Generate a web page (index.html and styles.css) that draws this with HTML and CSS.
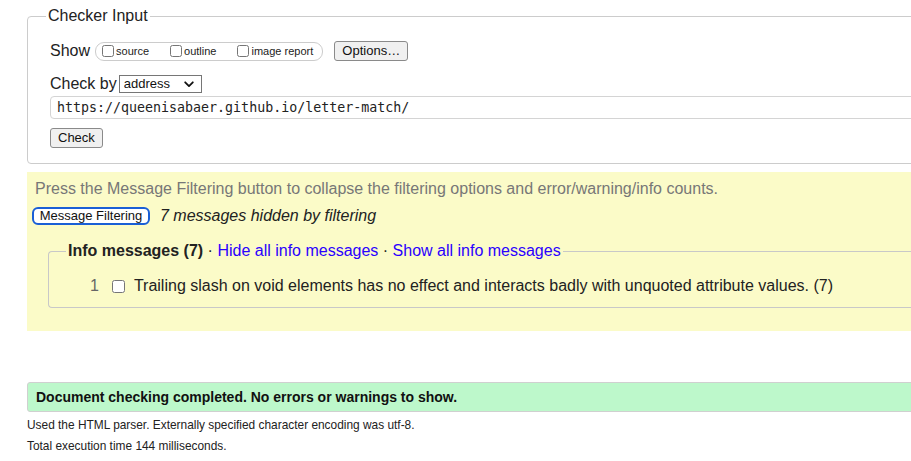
FILE: index.html
```html
<!DOCTYPE html>
<html lang="en">
<head>
<meta charset="utf-8">
<title>Nu Html Checker</title>
<link rel="stylesheet" href="styles.css">
</head>
<body>
<form class="checker">
  <fieldset class="input-set">
    <legend>Checker Input</legend>
    <div class="show-row">
      <span class="lbl">Show</span>
      <span class="pill">
        <label class="opt"><input type="checkbox">source</label>
        <label class="opt"><input type="checkbox">outline</label>
        <label class="opt"><input type="checkbox">image report</label>
      </span>
      <button type="button" class="btn">Options…</button>
    </div>
    <div class="checkby-row">
      <span class="lbl">Check by</span>
      <span class="select-wrap">
        <select class="sel"><option>address</option></select>
        <svg class="chev" width="10" height="7" viewBox="0 0 10 7"><path d="M1.2 1.3 L5 5.1 L8.8 1.3" fill="none" stroke="#111" stroke-width="1.8" stroke-linecap="round" stroke-linejoin="round"/></svg>
      </span>
    </div>
    <input class="url" type="text" value="https://queenisabaer.github.io/letter-match/">
    <div class="submit-row"><button type="button" class="btn">Check</button></div>
  </fieldset>
</form>

<section class="filters">
  <p class="hint">Press the Message Filtering button to collapse the filtering options and error/warning/info counts.</p>
  <div class="mf-row">
    <button type="button" class="mf-btn">Message Filtering</button>
    <em class="hidden-count">7 messages hidden by filtering</em>
  </div>
  <fieldset class="info-set">
    <legend><strong>Info messages (7)</strong> · <a href="#" class="lnk">Hide all info messages</a> · <a href="#" class="lnk">Show all info messages</a></legend>
    <div class="msg">
      <span class="num">1</span>
      <input type="checkbox" class="msg-check">
      <span class="msg-text">Trailing slash on void elements has no effect and interacts badly with unquoted attribute values. (7)</span>
    </div>
  </fieldset>
</section>

<p class="success">Document checking completed. No errors or warnings to show.</p>
<p class="meta first">Used the HTML parser. Externally specified character encoding was utf-8.</p>
<p class="meta">Total execution time 144 milliseconds.</p>
</body>
</html>
```

FILE: styles.css
```css
html, body {
  margin: 0;
  overflow: hidden;
}
body {
  padding: 7px 0 0 27px;
  font-family: "Liberation Sans", Arial, Helvetica, sans-serif;
  font-size: 16px;
  color: #222;
  background: #fff;
}

.checker { margin: 0; }

.input-set {
  margin: 0 -40px 0 0;
  border: 1px solid #ccc;
  border-radius: 4px;
  padding: 16px 0 15px 22px;
}
.input-set legend {
  margin-left: -4px;
  padding: 0 2px;
  font-size: 16px;
  line-height: 18px;
  color: #222;
}

.show-row {
  display: flex;
  align-items: center;
  height: 20px;
}
.lbl {
  font-size: 16px;
  line-height: 18px;
}
.pill {
  display: flex;
  align-items: center;
  margin-left: 5px;
  height: 17px;
  border: 1px solid #ccc;
  border-radius: 9px;
  padding: 0 9px 0 6px;
  gap: 21px;
}
.opt {
  display: flex;
  align-items: center;
  font-size: 11px;
  color: #222;
}
.opt input {
  margin: 0 2px 0 0;
  width: 12px;
  height: 12px;
}

.btn {
  font-family: "Liberation Sans", Arial, sans-serif;
  font-size: 13px;
  height: 20px;
  padding: 0 7px;
  border: 1px solid #8a8a8a;
  border-radius: 3px;
  background: #f0f0f0;
  color: #111;
  line-height: 18px;
}
.show-row .btn {
  margin-left: 11px;
  width: 74px;
  padding: 0;
}

.checkby-row {
  display: flex;
  align-items: center;
  margin-top: 14px;
  height: 18px;
}
.select-wrap {
  position: relative;
  display: inline-flex;
  margin-left: 2px;
}
.sel {
  appearance: none;
  -webkit-appearance: none;
  width: 83px;
  height: 18px;
  border: 1px solid #767676;
  border-radius: 0;
  background: #fff;
  font-family: "Liberation Sans", Arial, sans-serif;
  font-size: 13px;
  color: #111;
  padding: 0 0 0 4px;
  line-height: 16px;
}
.chev {
  position: absolute;
  right: 8px;
  top: 6px;
  pointer-events: none;
}

.url {
  display: block;
  box-sizing: border-box;
  margin-top: 3px;
  width: 100%;
  height: 23px;
  border: 1px solid #d4d4d4;
  border-radius: 4px;
  padding: 0 6px;
  font-family: "DejaVu Sans Mono", "Liberation Mono", monospace;
  font-size: 13.3px;
  color: #222;
}

.submit-row {
  margin-top: 9px;
  display: flex;
}

.filters {
  margin: 8px -40px 0 0;
  background: #fbfbc8;
  padding: 8px 0 23px 8px;
}
.hint {
  margin: 0;
  font-size: 16px;
  line-height: 18px;
  color: #777;
}
.mf-row {
  display: flex;
  align-items: center;
  margin: 9px 0 0 -3px;
  gap: 10px;
}
.mf-btn {
  height: 18px;
  box-sizing: border-box;
  font-family: "Liberation Sans", Arial, sans-serif;
  font-size: 13px;
  line-height: 14px;
  padding: 0 5px 0 5px;
  width: 118px;
  border: 2px solid #1a5fd6;
  border-radius: 6px;
  background: #fff;
  color: #111;
}
.hidden-count {
  font-size: 16px;
  line-height: 18px;
  color: #222;
}

.info-set {
  margin: 17px 0 0 13px;
  border: 1px solid #c8c8c8;
  border-right: none;
  border-radius: 4px 0 0 4px;
  padding: 17px 0 12px 17px;
}
.info-set legend {
  padding: 0 2px;
  font-size: 16px;
  line-height: 18px;
  color: #222;
}
.info-set strong { font-weight: bold; }
.lnk {
  color: #2a00ff;
  text-decoration: none;
}

.msg {
  display: flex;
  align-items: center;
  height: 18px;
  font-size: 16px;
  line-height: 18px;
}
.num {
  margin-left: 24px;
  color: #666;
}
.msg-check {
  margin: 0 0 0 13px;
  width: 13px;
  height: 13px;
}
.msg-text {
  margin-left: 9px;
  color: #222;
}

.success {
  margin: 51px -40px 0 0;
  padding: 6px 8px;
  background: #bdf8cb;
  border: 1px solid #d0d0d0;
  border-radius: 3px;
  font-size: 14px;
  font-weight: bold;
  line-height: 16px;
  color: #111;
}
.meta {
  margin: 7px 0 0 0;
  font-size: 11.9px;
  line-height: 14px;
  color: #222;
}
.meta.first {
  margin-top: 6px;
}
```
